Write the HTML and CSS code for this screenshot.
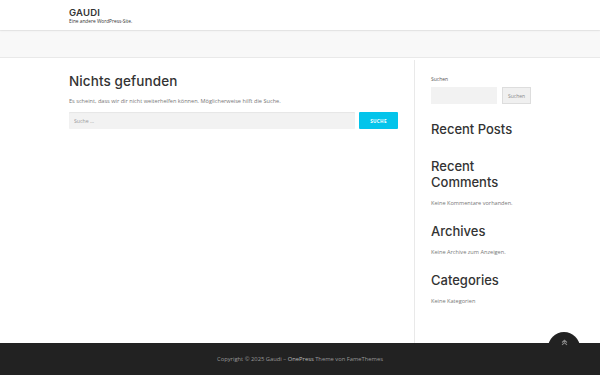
FILE: index.html
```html
<!DOCTYPE html>
<html lang="de">
<head>
    <meta charset="UTF-8">
    <meta name="viewport" content="width=device-width, initial-scale=1.0">
    <title>Nichts gefunden – Gaudi</title>
    <link rel="stylesheet" href="styles.css">
</head>
<body>
    <header class="site-header">
        <div class="container">
            <div class="site-title">GAUDI</div>
            <div class="site-description">Eine andere WordPress-Site.</div>
        </div>
    </header>

    <div class="page-header"></div>

    <div class="site-content">
        <div class="container content-wrap">
            <main class="content-area">
                <h1 class="page-title">Nichts gefunden</h1>
                <p>Es scheint, dass wir dir nicht weiterhelfen können. Möglicherweise hilft die Suche.</p>
                <form class="search-form">
                    <input type="search" class="search-field" placeholder="Suche …">
                    <button type="submit" class="search-submit">Suche</button>
                </form>
            </main>

            <aside class="sidebar">
                <section class="widget widget-search">
                    <label class="widget-label">Suchen</label>
                    <div class="sidebar-search">
                        <input type="text" class="sidebar-field">
                        <button type="button" class="sidebar-submit">Suchen</button>
                    </div>
                </section>
                <section class="widget widget-empty">
                    <h2 class="widget-title">Recent Posts</h2>
                </section>
                <section class="widget">
                    <h2 class="widget-title">Recent Comments</h2>
                    <p>Keine Kommentare vorhanden.</p>
                </section>
                <section class="widget">
                    <h2 class="widget-title">Archives</h2>
                    <p>Keine Archive zum Anzeigen.</p>
                </section>
                <section class="widget">
                    <h2 class="widget-title">Categories</h2>
                    <p>Keine Kategorien</p>
                </section>
            </aside>
        </div>
    </div>

    <footer class="site-footer">
        <a href="#" class="back-to-top" title="Back To Top">
            <svg width="7" height="7" viewBox="0 0 10 10" fill="none" stroke="#888" stroke-width="1.6">
                <polyline points="1.5,5 5,1.8 8.5,5"/>
                <polyline points="1.5,8.5 5,5.3 8.5,8.5"/>
            </svg>
        </a>
        <div class="site-info">
            Copyright © 2025 Gaudi – <a href="#">OnePress</a> Theme von FameThemes
        </div>
    </footer>
</body>
</html>
```

FILE: styles.css
```css
body {
    margin: 0;
    font-family: "Open Sans", Arial, sans-serif;
    font-size: 5.6px;
    color: #777;
    background: white;
    display: flex;
    flex-direction: column;
    min-height: 100vh;
}
p {
    margin: 0;
    line-height: 8px;
}
.container {
    width: 462px;
    margin: 0 auto;
}
.site-header {
    height: 30px;
    background: white;
    box-shadow: 0 1px 2px rgba(0,0,0,0.06);
    position: relative;
    z-index: 1;
}
.site-header .container {
    padding-top: 8px;
}
.site-title {
    font-family: Inter, "Liberation Sans", sans-serif;
    font-weight: 600;
    font-size: 9.5px;
    line-height: 10px;
    letter-spacing: 0.2px;
    color: #333;
}
.site-description {
    font-size: 4.8px;
    line-height: 7px;
    color: #333;
}
.page-header {
    height: 26px;
    background: #f8f8f8;
    border-top: 1px solid #eee;
    border-bottom: 1px solid #e9e9e9;
}
.site-content {
    flex: 1;
    display: flex;
}
.content-wrap {
    display: flex;
}
.content-area {
    width: 329px;
    padding-top: 14px;
    padding-right: 16px;
}
.page-title {
    font-family: Inter, "Liberation Sans", sans-serif;
    font-weight: 500;
    font-size: 13.5px;
    line-height: 18px;
    color: #333;
    margin: 0 0 7px;
    letter-spacing: 0.1px;
}
.search-form {
    display: flex;
    gap: 4px;
    margin-top: 7px;
}
.search-field {
    flex: 1;
    height: 17px;
    box-sizing: border-box;
    border: none;
    border-radius: 1px;
    background: #f2f2f2;
    box-shadow: inset 0 1px 1px rgba(0,0,0,0.05);
    padding: 0 5px;
    font-family: inherit;
    font-size: 5.2px;
    color: #999;
}
.search-field::placeholder {
    color: #999;
}
.search-submit {
    width: 39px;
    height: 17px;
    border: none;
    border-radius: 1px;
    background: #03c4eb;
    color: white;
    font-family: inherit;
    font-weight: 700;
    font-size: 4.6px;
    text-transform: uppercase;
    letter-spacing: 0.3px;
    padding: 0;
}
.sidebar {
    border-left: 1px solid #e9e9e9;
    padding: 16px 0 20px 16px;
    width: 100px;
    margin-top: 2px;
}
.widget {
    margin-bottom: 16px;
}
.widget-search {
    margin-bottom: 17px;
}
.widget-empty {
    margin-bottom: 21px;
}
.widget-label {
    display: block;
    font-size: 5px;
    color: #555;
    margin-bottom: 5px;
}
.sidebar-search {
    display: flex;
    gap: 5px;
}
.sidebar-field {
    width: 66px;
    height: 17px;
    box-sizing: border-box;
    border: none;
    background: #f2f2f2;
    padding: 0;
}
.sidebar-submit {
    width: 29px;
    height: 17px;
    box-sizing: border-box;
    border: 1px solid #ddd;
    background: #f0f0f0;
    color: #888;
    font-family: inherit;
    font-size: 5px;
    padding: 0;
}
.widget-title {
    font-family: Inter, "Liberation Sans", sans-serif;
    font-weight: 500;
    font-size: 13px;
    line-height: 16px;
    color: #333;
    margin: 0 0 9px;
}
.site-footer {
    height: 32px;
    background: #222;
    position: relative;
    display: flex;
    align-items: center;
    justify-content: center;
}
.site-info {
    font-size: 5.8px;
    color: #999;
}
.site-info a {
    color: #bbb;
    text-decoration: none;
}
.back-to-top {
    position: absolute;
    right: 20px;
    top: -11px;
    width: 32px;
    height: 22px;
    background: #222;
    border-radius: 16px 16px 0 0;
    display: flex;
    justify-content: center;
    padding-top: 7px;
    box-sizing: border-box;
}
```
